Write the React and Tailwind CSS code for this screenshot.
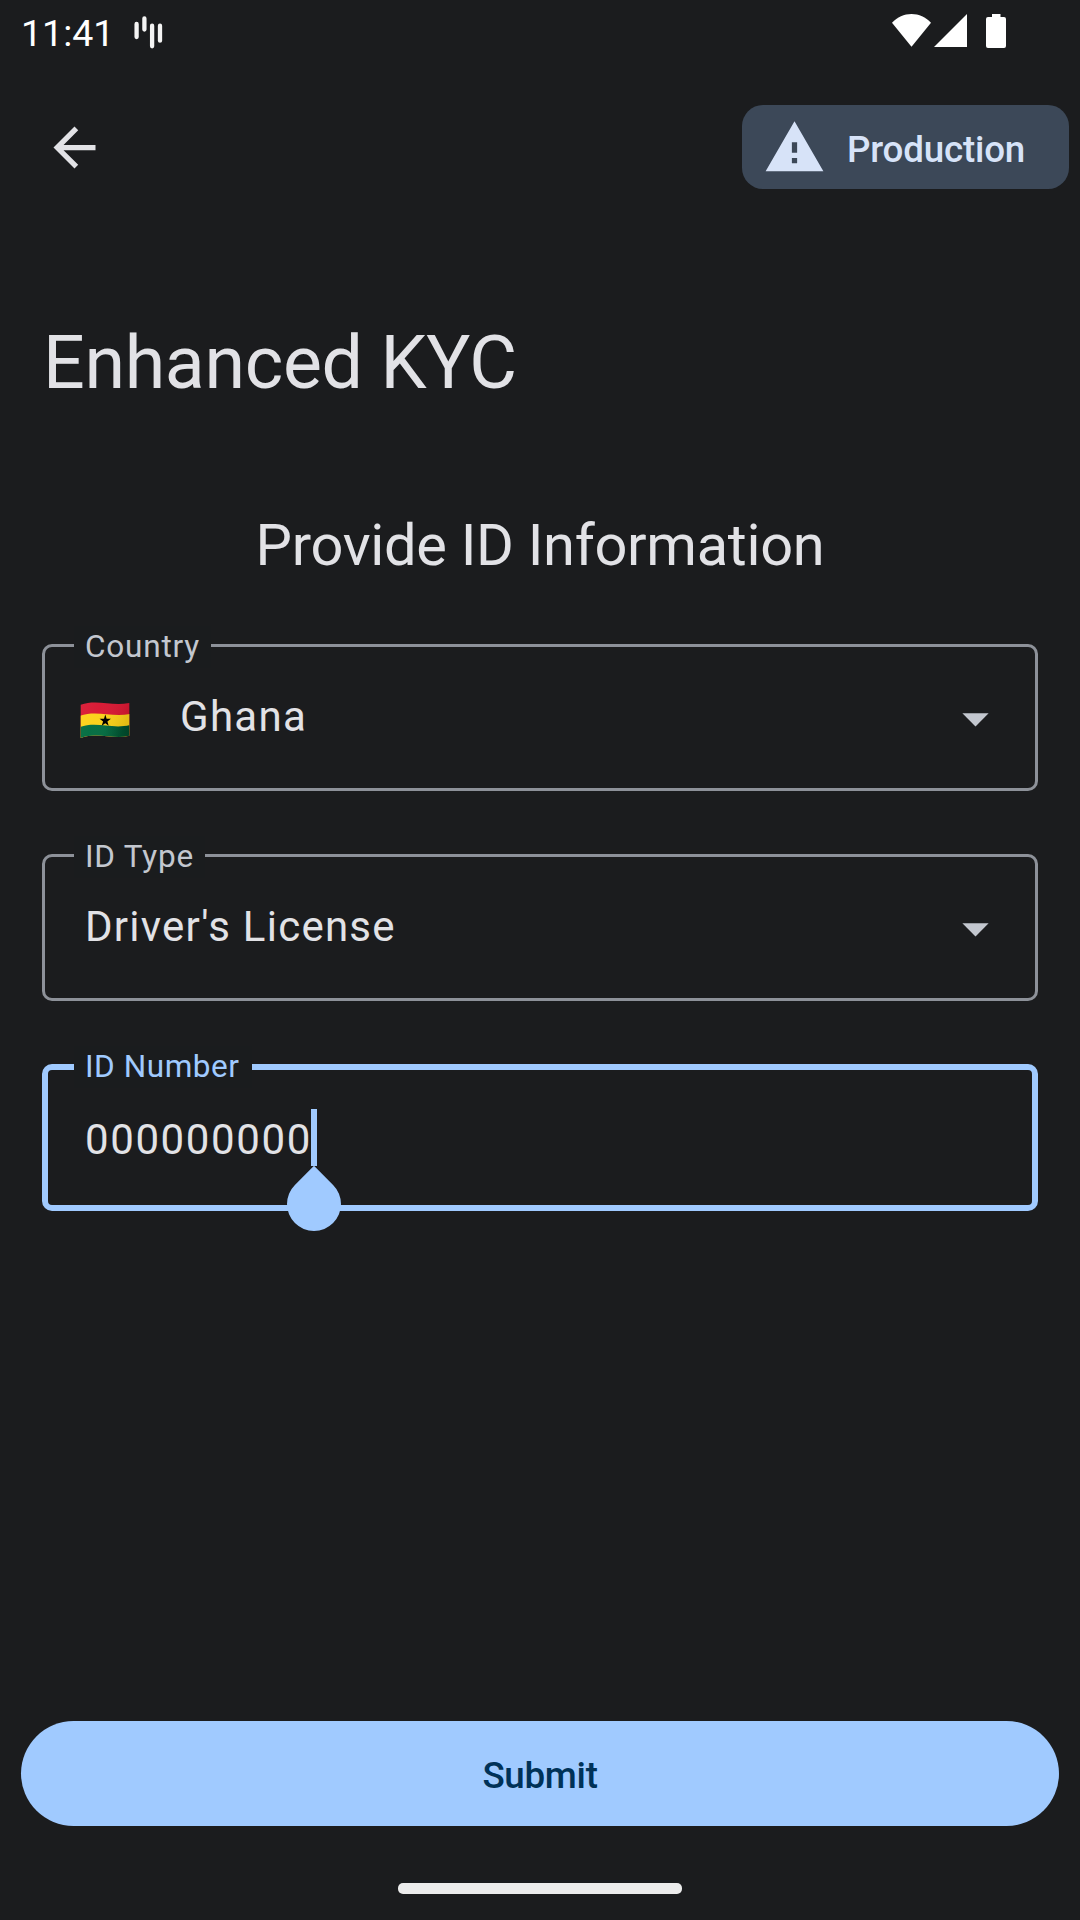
function StatusBar() {
  return (
    <header className="flex h-[63px] items-start justify-between pl-[21px] pr-[74px]">
      <div className="flex items-start">
        <span className="mt-[11px] w-[112px] text-[37.5px] leading-[44px] text-white">11:41</span>
        <svg className="mt-[15px] h-[35px] w-[30px]" viewBox="0 0 30 35" stroke="#f4f4f4" strokeWidth="4.3" strokeLinecap="round">
          <path d="M3.6 9v13M11.4 3.5v11M19.1 10.7v20.6M27 10.7v15" />
        </svg>
      </div>
      <div className="flex items-start pt-[14px]">
        <svg className="h-[33px] w-[39px]" viewBox="0 0 39 33" fill="#fff">
          <path d="M0 8.8C5.4 3 12 0 19.5 0S33.600 3 39 8.8L19.500 32.800z" />
        </svg>
        <svg className="ml-[3px] h-[33px] w-[33px]" viewBox="0 0 33 33" fill="#fff">
          <path d="M0 33L33 0v33z" />
        </svg>
        <svg className="ml-[19px] h-[34px] w-[20px]" viewBox="0 0 20 34" fill="#fff">
          <path d="M6 0h8.500v3h3.500a2 2 0 0 1 2 2v27a2 2 0 0 1-2 2H2a2 2 0 0 1-2-2V5a2 2 0 0 1 2-2h4z" />
        </svg>
      </div>
    </header>
  );
}

function GhanaFlag() {
  return (
    <svg className="h-[37px] w-[50px] shrink-0" viewBox="0 0 50 37">
      <defs>
        <linearGradient id="flagShade" x1="0" x2="1" y1="0" y2="0.3">
          <stop offset="0" stopColor="#fff" stopOpacity="0.06" />
          <stop offset="0.4" stopColor="#fff" stopOpacity="0.03" />
          <stop offset="1" stopColor="#000" stopOpacity="0.1" />
        </linearGradient>
        <linearGradient id="flagGreen" x1="0" x2="1" y1="0" y2="0">
          <stop offset="0" stopColor="#006b3f" />
          <stop offset="0.5" stopColor="#006b3f" />
          <stop offset="1" stopColor="#00492b" />
        </linearGradient>
        <clipPath id="flagShape">
          <path d="M.7 2.800C17-3 32 4.700 49.300 1V33.700C33 37.800 17 29.500.7 36z" />
        </clipPath>
      </defs>
      <g clipPath="url(#flagShape)">
        <rect width="50" height="37" fill="#d81530" />
        <path d="M0 13.800C17 8 32 15.700 50 12V37H0z" fill="#fcd116" />
        <path d="M0 25C17 19 32 27.500 50 23V37H0z" fill="url(#flagGreen)" />
        <rect width="50" height="37" fill="url(#flagShade)" />
      </g>
      <path d="M25.300 12.600l1.300 4.200h4.300l-3.500 2.700 1.300 4.300-3.400-2.600-3.600 2.500 1.400-4.200-3.500-2.700h4.400z" fill="#000" />
    </svg>
  );
}

function Label({ children, className }) {
  return (
    <span className={"absolute left-[32px] pl-[11px] whitespace-nowrap bg-[#1a1c1e] text-[31.5px] leading-[42px] " + className}>
      {children}
    </span>
  );
}

function SelectField({ label, value, icon }) {
  return (
    <div className="relative flex h-[147px] items-center rounded-[10px] border-[3px] border-[#8d9199] pr-[28px]">
      <Label className="-top-[21px] -ml-[3px] pr-[11px] tracking-[0.8px] text-[#c3c7cf]">{label}</Label>
      {icon && <div className="mt-[5px] ml-[35px] w-[55px]">{icon}</div>}
      <span className={"text-[42px] leading-[63px] -mt-[2px] text-[#e2e2e6] " + (icon ? "ml-[45px] tracking-[1.31px]" : "ml-[40px] tracking-[1.24px]")}>{value}</span>
      <svg className="mt-[2px] ml-auto h-[63px] w-[63px]" viewBox="0 0 24 24" fill="#c3c7cf">
        <path d="M7 10l5 5 5-5z" />
      </svg>
    </div>
  );
}

export default function App() {
  return (
    <div className="flex h-[1920px] w-[1080px] flex-col overflow-hidden bg-[#1b1c1e] font-['Roboto',sans-serif] text-[#e2e2e6]">
      <StatusBar />
      <div className="flex h-[168px] items-center justify-between pl-[43px] pr-[11px]">
        <svg className="h-[63px] w-[63px]" viewBox="0 0 24 24" fill="#e2e2e6">
          <path d="M20 11H7.830l5.590-5.590L12 4l-8 8 8 8 1.410-1.410L7.830 13H20z" />
        </svg>
        <div className="flex h-[84px] w-[327px] items-center rounded-[21px] bg-[#3c4858] pl-[21px] text-[#d7e3f8]">
          <svg className="h-[63px] w-[63px]" viewBox="0 0 24 24" fill="currentColor">
            <path d="M1 21h22L12 2zm12-3h-2v-2h2zm0-4h-2v-4h2z" />
          </svg>
          <span className="mt-[5px] ml-[21px] text-[36.75px] leading-[52px] font-medium tracking-[-0.2px]">Production</span>
        </div>
      </div>
      <main className="flex flex-1 flex-col px-[42px]">
        <h1 className="mt-[85px] ml-[1px] text-[73.5px] leading-[95px] tracking-[-0.33px]">Enhanced KYC</h1>
        <h2 className="mt-[97px] text-center text-[57.75px] leading-[74px] tracking-[-0.3px]">Provide ID Information</h2>
        <div className="mt-[62px] flex flex-col gap-[63px]">
          <SelectField label="Country" value="Ghana" icon={<GhanaFlag />} />
          <SelectField label="ID Type" value="Driver's License" />
          <div className="relative flex h-[147px] items-center rounded-[10px] border-[6px] border-[#a0caff] pl-[37px]">
            <Label className="-top-[24px] -ml-[6px] pr-[12px] tracking-[0.55px] text-[#a0caff]">ID Number</Label>
            <span className="mt-[4px] text-[42px] leading-[63px] tracking-[1.6px]">000000000</span>
            <span className="absolute top-[39px] left-[263px] h-[57px] w-[6px] bg-[#a0caff]" />
            <span className="absolute top-[107px] left-[239px] h-[54px] w-[54px] rotate-45 rounded-full rounded-tl-none bg-[#a0caff]" />
          </div>
        </div>
      </main>
      <footer className="flex h-[199px] flex-col items-center px-[21px]">
        <button className="h-[105px] w-full rounded-full bg-[#a0caff] pt-[5px] text-[36.75px] leading-[52px] font-medium tracking-[-0.3px] text-[#003258]">
          Submit
        </button>
        <div className="mt-[57px] h-[11px] w-[284px] rounded-[5px] bg-[#ececec]" />
      </footer>
    </div>
  );
}
